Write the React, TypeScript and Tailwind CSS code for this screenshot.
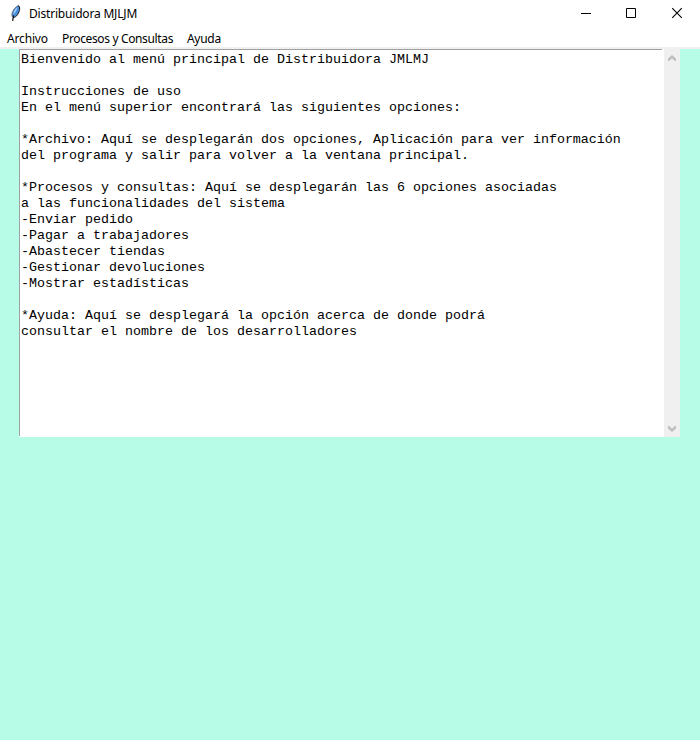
const menuItems = [
  { label: 'Archivo', style: 'w-[55px] tracking-[-0.16px]' },
  { label: 'Procesos y Consultas', style: 'w-[125px] tracking-[-0.36px]' },
  { label: 'Ayuda', style: 'w-[50px] tracking-[-0.3px]' },
];

const message = `Bienvenido al menú principal de Distribuidora JMLMJ

Instrucciones de uso
En el menú superior encontrará las siguientes opciones:

*Archivo: Aquí se desplegarán dos opciones, Aplicación para ver información
del programa y salir para volver a la ventana principal.

*Procesos y consultas: Aquí se desplegarán las 6 opciones asociadas
a las funcionalidades del sistema
-Enviar pedido
-Pagar a trabajadores
-Abastecer tiendas
-Gestionar devoluciones
-Mostrar estadísticas

*Ayuda: Aquí se desplegará la opción acerca de donde podrá
consultar el nombre de los desarrolladores`;

function Feather() {
  return (
    <svg width="12" height="18" viewBox="0 0 12 18" fill="none">
      <path d="M3.4 13.2C2 10 3.6 5 9.2 1.6C11.6 2.6 10.8 7 8.6 10.6C7 12.8 5.4 13.8 3.4 13.2Z" fill="#4a8fdc" />
      <path d="M3.2 12.6C2.2 9.6 4 4.8 9.2 1.6" stroke="#4a5666" strokeWidth="0.8" />
      <path d="M9.2 1.6C11.6 2.6 10.8 7 8.6 10.6C7.2 12.6 5.6 13.6 4 13.4" stroke="#101010" strokeWidth="1" />
      <path d="M4.4 10C4.6 7 6.2 4.8 8.4 3.2C8 5.6 6.6 8 4.4 10.6Z" fill="#a6d0f6" />
      <path d="M4.6 11.4L3.6 16.8" stroke="#101010" strokeWidth="1.2" />
    </svg>
  );
}

function Arrow({ down = false }: { down?: boolean }) {
  return (
    <svg width="8" height="6" viewBox="0 0 8 6" className={down ? 'rotate-180' : ''}>
      <path d="M0 3.6L4 0L8 3.6V6H6.8L4 3.3L1.2 6H0Z" fill="#bfbfbf" />
    </svg>
  );
}

export default function App() {
  return (
    <div className="flex h-[740px] w-[700px] flex-col overflow-hidden bg-[#b6fce6] text-black">
      <header className="flex h-[27px] shrink-0 bg-white">
        <div className="flex flex-1 pl-[9px] pt-[4px]">
          <Feather />
          <h1 className="ml-2 mt-px whitespace-nowrap font-['Noto_Sans',sans-serif] text-[12px] leading-[18px] tracking-[-0.19px]">
            Distribuidora MJLJM
          </h1>
        </div>
        <svg width="137" height="27" viewBox="563 0 137 27" fill="none" stroke="#000">
          <path d="M581 13.5H591" />
          <path d="M626.5 8.5H635.5V17.5H626.5Z" />
          <path d="M672.2 8.2L681.8 17.8M681.8 8.2L672.2 17.8" strokeWidth="1.1" />
        </svg>
      </header>
      <nav className="flex h-[20px] shrink-0 bg-white pl-[7px] pt-[3px] font-['Noto_Sans',sans-serif] text-[12px] leading-[18px]">
        {menuItems.map((item) => (
          <span key={item.label} className={`whitespace-nowrap ${item.style}`}>
            {item.label}
          </span>
        ))}
      </nav>
      <div className="h-[2px] shrink-0 bg-[#f0f0f0]" />
      <main className="ml-[19px] flex h-[388px] w-[661px]">
        <div className="flex w-[645px] flex-col bg-white">
          <div className="h-px w-[643px] shrink-0 bg-[#a0a0a0]" />
          <div className="flex h-[386px]">
            <div className="w-px bg-[#a0a0a0]" />
            <pre className="pl-px pt-[2px] font-['Liberation_Mono',monospace] text-[13.333px] leading-[16px]">
              {message}
            </pre>
          </div>
        </div>
        <div className="flex w-4 flex-col items-center justify-between bg-[#f0f0f0] pb-[5px] pt-[6px]">
          <Arrow />
          <Arrow down />
        </div>
      </main>
    </div>
  );
}
